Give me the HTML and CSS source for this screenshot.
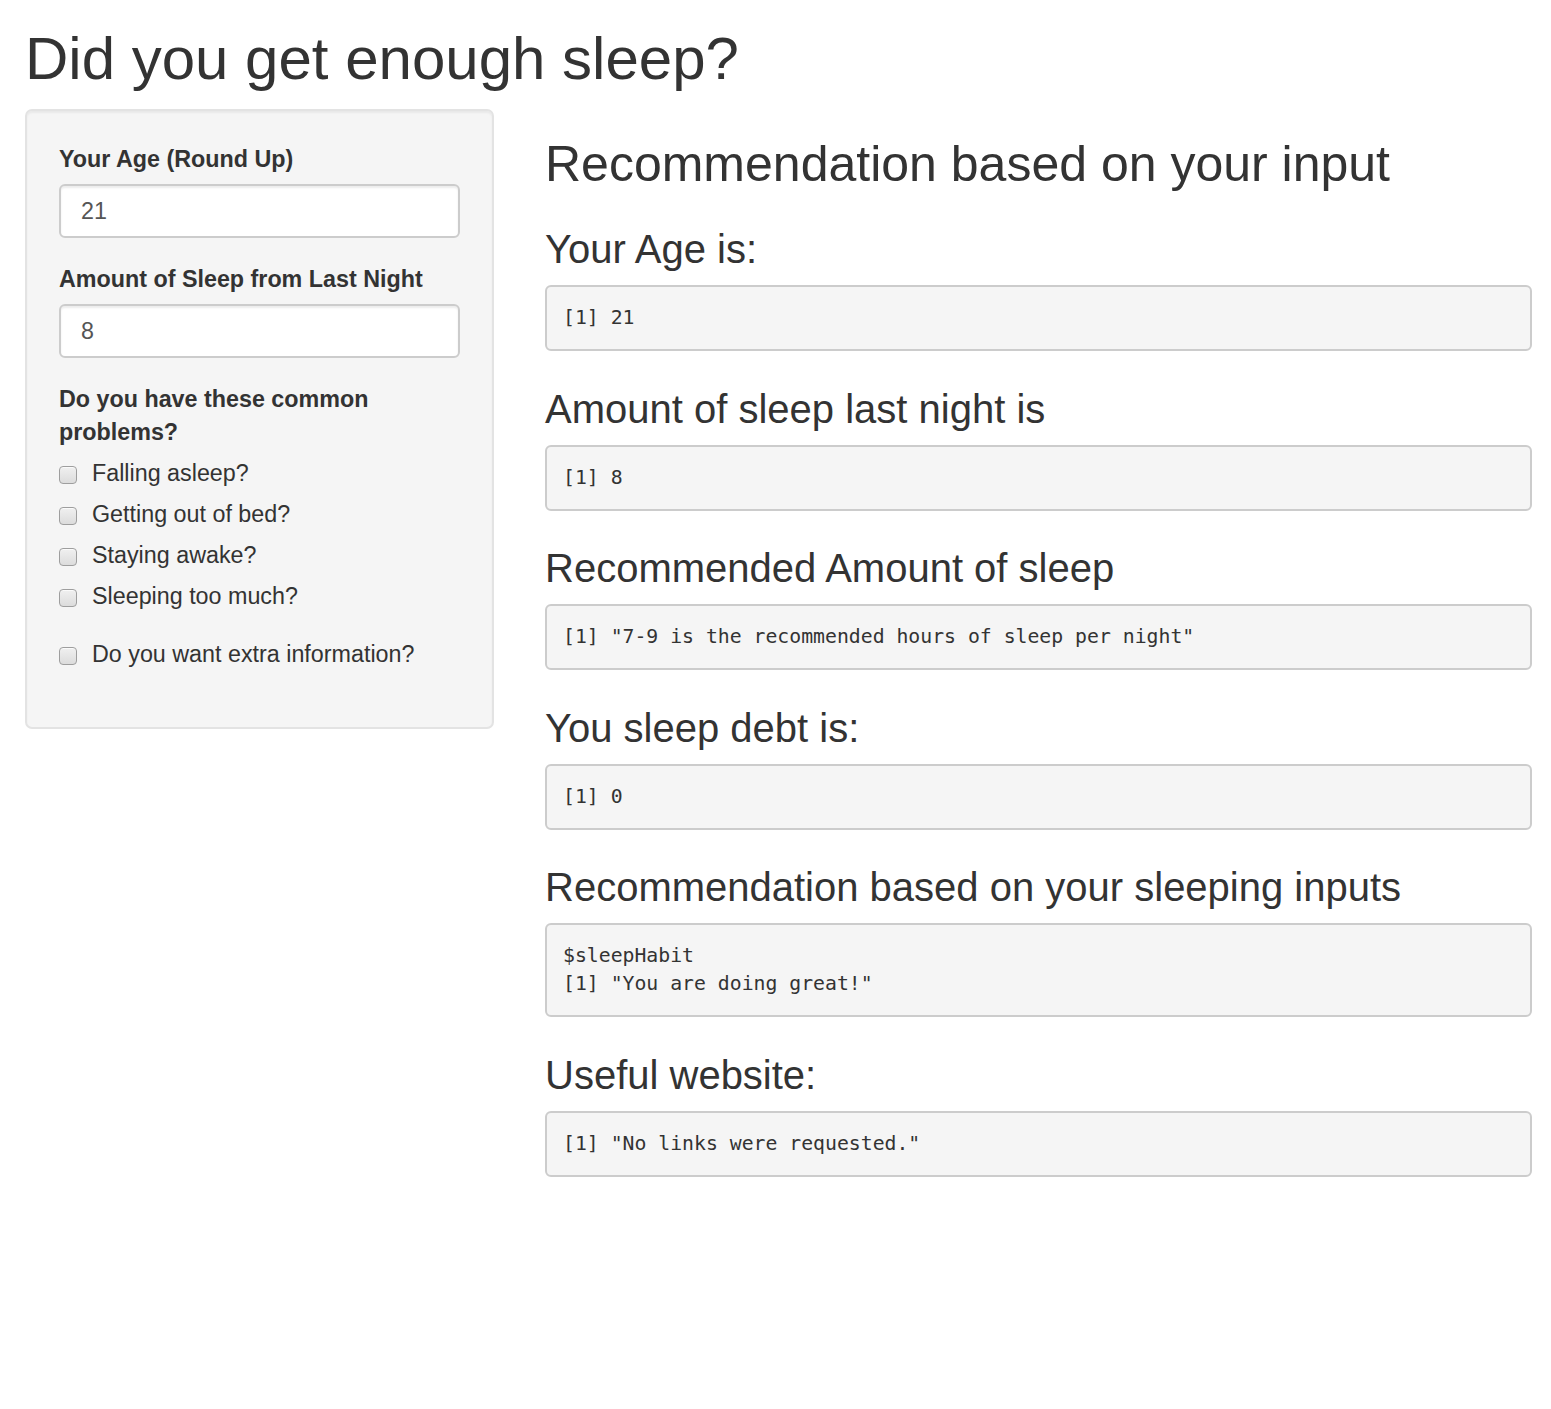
FILE: index.html
```html
<!DOCTYPE html>
<html lang="en">
<head>
<meta charset="utf-8">
<title>Did you get enough sleep?</title>
<link rel="stylesheet" href="styles.css">
</head>
<body>
<div class="page">
  <h1 class="title">Did you get enough sleep?</h1>
  <div class="layout">
    <aside class="sidebar">
      <div class="well">
        <div class="form-group">
          <label class="control-label" for="age">Your Age (Round Up)</label>
          <input class="form-control" id="age" type="number" value="21">
        </div>
        <div class="form-group">
          <label class="control-label" for="sleep">Amount of Sleep from Last Night</label>
          <input class="form-control" id="sleep" type="number" value="8">
        </div>
        <div class="form-group">
          <label class="control-label">Do you have these common problems?</label>
          <div class="options">
            <label class="checkbox"><input type="checkbox"><span>Falling asleep?</span></label>
            <label class="checkbox"><input type="checkbox"><span>Getting out of bed?</span></label>
            <label class="checkbox"><input type="checkbox"><span>Staying awake?</span></label>
            <label class="checkbox"><input type="checkbox"><span>Sleeping too much?</span></label>
          </div>
        </div>
        <div class="form-group">
          <label class="checkbox"><input type="checkbox"><span>Do you want extra information?</span></label>
        </div>
      </div>
    </aside>
    <main class="main">
      <h2>Recommendation based on your input</h2>
      <h3>Your Age is:</h3>
      <pre>[1] 21</pre>
      <h3>Amount of sleep last night is</h3>
      <pre>[1] 8</pre>
      <h3>Recommended Amount of sleep</h3>
      <pre>[1] "7-9 is the recommended hours of sleep per night"</pre>
      <h3>You sleep debt is:</h3>
      <pre>[1] 0</pre>
      <h3>Recommendation based on your sleeping inputs</h3>
      <pre>$sleepHabit
[1] "You are doing great!"</pre>
      <h3>Useful website:</h3>
      <pre>[1] "No links were requested."</pre>
    </main>
  </div>
</div>
</body>
</html>
```
FILE: styles.css
```css
* { box-sizing: border-box; }

html, body {
  margin: 0;
  padding: 0;
  background: #fff;
}

body {
  font-family: "Liberation Sans", Arial, Helvetica, sans-serif;
  font-size: 23.3px;
  line-height: 33px;
  color: #333;
}

.page {
  padding: 0 19px 0 25px;
}

.title {
  font-size: 60px;
  font-weight: 500;
  line-height: 66px;
  margin: 26px 0 17px;
}

.layout {
  display: grid;
  grid-template-columns: 469px 1fr;
  column-gap: 51px;
  align-items: start;
}

/* sidebar well */
.well {
  background: #f5f5f5;
  border: 2px solid #e3e3e3;
  border-radius: 7px;
  box-shadow: inset 0 2px 2px rgba(0, 0, 0, 0.05);
  padding: 32px 32px 31px;
}

.form-group {
  margin-bottom: 25px;
}

.control-label {
  display: block;
  font-weight: 700;
  line-height: 33px;
  margin-bottom: 8px;
}

.form-control {
  display: block;
  width: 100%;
  height: 54px;
  padding: 0 20px;
  font-family: inherit;
  font-size: 23.3px;
  color: #555;
  background: #fff;
  border: 2px solid #ccc;
  border-radius: 6px;
  box-shadow: inset 0 2px 2px rgba(0, 0, 0, 0.075);
  outline: none;
  -moz-appearance: textfield;
}

.form-control::-webkit-outer-spin-button,
.form-control::-webkit-inner-spin-button {
  -webkit-appearance: none;
  margin: 0;
}

.options {
  display: flex;
  flex-direction: column;
  gap: 8px;
}

.checkbox {
  display: flex;
  align-items: center;
  line-height: 33px;
  font-weight: 400;
  cursor: pointer;
}

.checkbox input {
  -webkit-appearance: none;
  appearance: none;
  flex: none;
  width: 18px;
  height: 18px;
  margin: 3px 15px 0 0;
  border: 1px solid #9e9e9e;
  border-radius: 4px;
  background: linear-gradient(#f0f0f0, #dcdcdc);
  box-shadow: inset 0 1px 0 rgba(255, 255, 255, 0.7);
}

/* main column */
.main h2 {
  font-size: 50px;
  font-weight: 500;
  line-height: 55px;
  margin: 27.5px 0 16px;
}

.main h3 {
  font-size: 40px;
  font-weight: 500;
  line-height: 44px;
  margin: 35.5px 0 14px;
}

.main pre {
  margin: 0 0 16px;
  padding: 17px 16px;
  font-family: "DejaVu Sans Mono", "Liberation Mono", monospace;
  font-size: 19.8px;
  line-height: 28px;
  color: #333;
  background: #f5f5f5;
  border: 2px solid #ccc;
  border-radius: 6px;
  white-space: pre-wrap;
}
```
